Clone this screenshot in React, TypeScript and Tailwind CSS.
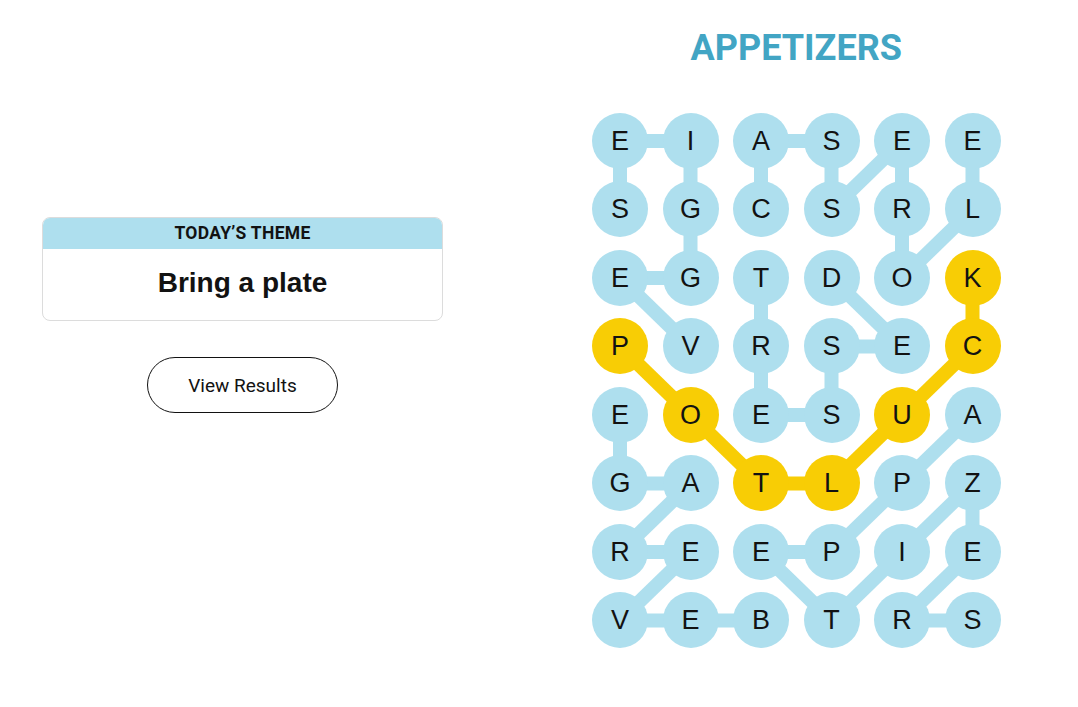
import React from "react";

const LETTERS = [
  "EIASEE",
  "SGCSRL",
  "EGTDOK",
  "PVRSEC",
  "EOESUA",
  "GATLPZ",
  "REEPIE",
  "VEBTRS",
];

type P = [number, number];

const BLUE_EDGES: [P, P][] = [
  [[0, 0], [0, 1]], [[0, 0], [1, 0]], [[0, 1], [1, 1]], [[1, 1], [2, 1]], [[2, 0], [2, 1]], [[2, 0], [3, 1]],
  [[0, 2], [0, 3]], [[0, 2], [1, 2]], [[0, 3], [1, 3]], [[1, 3], [0, 4]], [[0, 4], [1, 4]], [[1, 4], [2, 4]], [[0, 5], [1, 5]], [[1, 5], [2, 4]],
  [[2, 2], [3, 2]], [[3, 2], [4, 2]], [[4, 2], [4, 3]], [[4, 3], [3, 3]], [[3, 3], [3, 4]], [[3, 4], [2, 3]],
  [[4, 0], [5, 0]], [[5, 0], [5, 1]], [[5, 1], [6, 0]], [[6, 0], [6, 1]], [[6, 1], [7, 0]], [[7, 0], [7, 1]], [[7, 1], [7, 2]],
  [[4, 5], [5, 4]], [[5, 4], [6, 3]], [[6, 3], [6, 2]], [[6, 2], [7, 3]], [[7, 3], [6, 4]], [[6, 4], [5, 5]], [[5, 5], [6, 5]], [[6, 5], [7, 4]], [[7, 4], [7, 5]],
];

const YELLOW_EDGES: [P, P][] = [
  [[3, 0], [4, 1]], [[4, 1], [5, 2]], [[5, 2], [5, 3]], [[5, 3], [4, 4]], [[4, 4], [3, 5]], [[3, 5], [2, 5]],
];

const YELLOW = new Set(["3,0", "4,1", "5,2", "5,3", "4,4", "3,5", "2,5"]);

const cx = (c: number) => 28 + c * 70.5;
const cy = (r: number) => 28 + r * 68.5;

function Board() {
  return (
    <div className="relative w-[408.5px] h-[535.5px]">
      <svg className="absolute inset-0" width="408.5" height="535.5" viewBox="0 0 408.5 535.5">
        {BLUE_EDGES.map(([a, b], i) => (
          <line key={"b" + i} x1={cx(a[1])} y1={cy(a[0])} x2={cx(b[1])} y2={cy(b[0])} stroke="#aedfee" strokeWidth={14} />
        ))}
        {YELLOW_EDGES.map(([a, b], i) => (
          <line key={"y" + i} x1={cx(a[1])} y1={cy(a[0])} x2={cx(b[1])} y2={cy(b[0])} stroke="#f8cd05" strokeWidth={14} />
        ))}
      </svg>
      <div className="relative grid grid-cols-[repeat(6,56px)] grid-rows-[repeat(8,56px)] gap-x-[14.5px] gap-y-[12.5px]">
        {LETTERS.map((row, r) =>
          row.split("").map((ch, c) => (
            <div
              key={r + "-" + c}
              className={
                "w-[56px] h-[56px] rounded-full flex items-center justify-center text-[27px] leading-none pt-[1px] text-[#121212] font-['Liberation_Sans',Arial,sans-serif] " +
                (YELLOW.has(r + "," + c) ? "bg-[#f8cd05]" : "bg-[#aedfee]")
              }
            >
              {ch}
            </div>
          ))
        )}
      </div>
    </div>
  );
}

export default function App() {
  return (
    <div className="w-[1078px] h-[707px] bg-white flex overflow-hidden">
      <div className="w-[401px] ml-[42px] pt-[217px] flex flex-col items-center">
        <div className="w-full rounded-[8px] border border-[#dcdcdc] overflow-hidden">
          <div className="h-[31px] bg-[#aedfee] flex items-center justify-center">
            <span className="font-['Roboto',sans-serif] font-bold text-[17.5px] leading-none text-[#121212] tracking-[0.3px]">
              TODAY’S THEME
            </span>
          </div>
          <div className="h-[71px] flex items-center justify-center pb-[4px]">
            <span className="font-['Liberation_Sans',Arial,sans-serif] font-bold text-[28px] leading-none text-[#121212]">
              Bring a plate
            </span>
          </div>
        </div>
        <button className="mt-[36px] w-[191px] h-[56px] rounded-full border border-[#121212] bg-white flex items-center justify-center pt-[2px] font-['Roboto',sans-serif] text-[19px] text-[#121212]">
          View Results
        </button>
      </div>
      <div className="ml-[149px] w-[408.5px] flex flex-col items-center pt-[30px]">
        <h1 className="font-['Roboto',sans-serif] font-bold text-[36px] leading-[36px] text-[#42a5c4]">
          APPETIZERS
        </h1>
        <div className="mt-[46.5px]">
          <Board />
        </div>
      </div>
    </div>
  );
}
